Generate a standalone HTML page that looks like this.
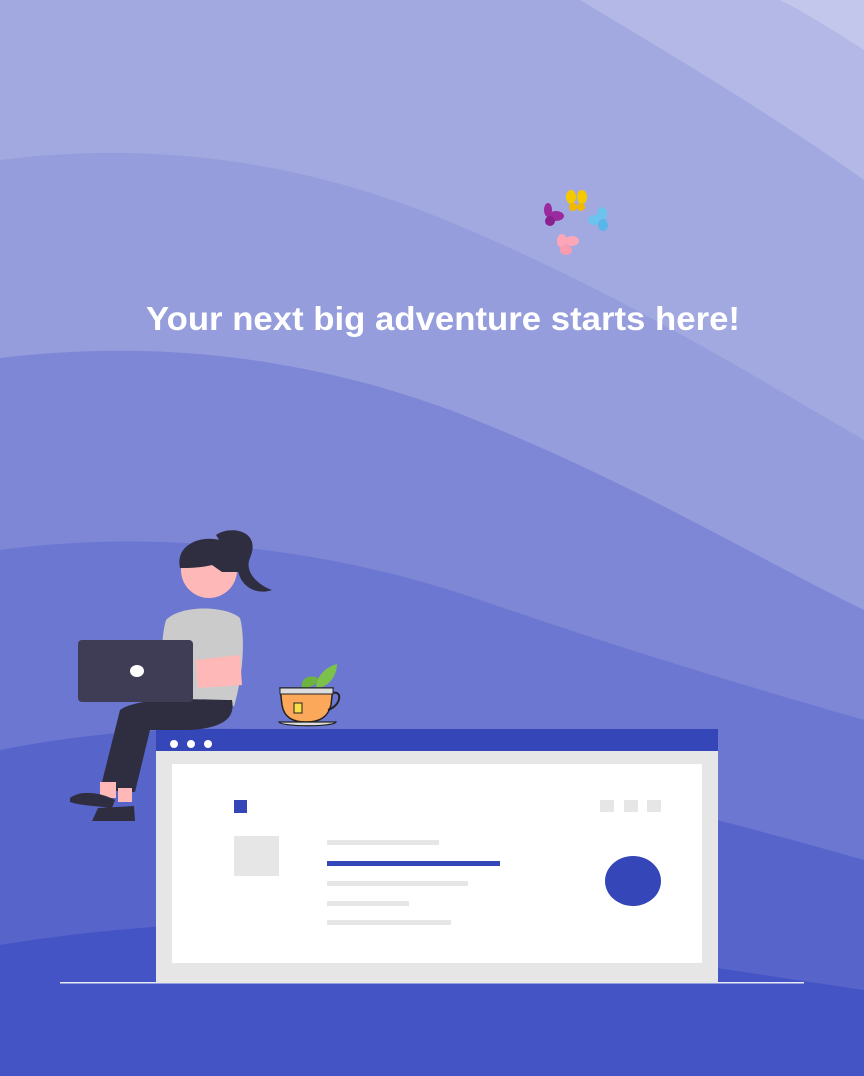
<!DOCTYPE html>
<html><head><style>
html,body{margin:0;padding:0;width:864px;height:1076px;overflow:hidden;background:#4453c4}
svg{display:block}
</style></head><body>
<svg width="864" height="1076" viewBox="0 0 864 1076" xmlns="http://www.w3.org/2000/svg">
<rect width="864" height="1076" fill="#a2a9e0"/>
<path d="M580 0 C680 60 780 120 864 180 L864 0Z" fill="#b3b8e6"/>
<path d="M780 0 C810 15 840 35 864 50 L864 0Z" fill="#c3c7ec"/>
<path d="M0 160 C120 145 260 150 420 210 C600 280 760 380 864 440 L864 1076 L0 1076Z" fill="#959ddc"/>
<path d="M0 358 C150 340 300 355 450 410 C620 475 760 560 864 610 L864 1076 L0 1076Z" fill="#7d87d6"/>
<path d="M0 550 C150 530 320 545 480 600 C640 655 760 690 864 720 L864 1076 L0 1076Z" fill="#6b77d0"/>
<path d="M0 750 C150 720 320 720 480 760 C640 800 760 830 864 860 L864 1076 L0 1076Z" fill="#5765cb"/>
<path d="M0 945 C150 920 320 915 480 935 C640 955 760 975 864 990 L864 1076 L0 1076Z" fill="#4554c5"/>
<text x="443" y="330" text-anchor="middle" font-family="Liberation Sans, sans-serif" font-size="33" font-weight="bold" fill="#fff" textLength="594" lengthAdjust="spacingAndGlyphs">Your next big adventure starts here!</text>
<!-- butterflies -->
<g transform="translate(576,201)"><ellipse cx="-5" cy="-4" rx="5" ry="7" fill="#f5c800"/><ellipse cx="6" cy="-4" rx="5" ry="7" fill="#f5c800"/><ellipse cx="-3" cy="6" rx="4" ry="4" fill="#f0b800"/><ellipse cx="5" cy="6" rx="4" ry="4" fill="#f0b800"/></g>
<g transform="translate(550,216)"><ellipse cx="-2" cy="-6" rx="4" ry="7" fill="#9b2a9e"/><ellipse cx="6" cy="0" rx="8" ry="5" fill="#9b2a9e"/><ellipse cx="0" cy="5" rx="5" ry="5" fill="#8a1f90"/></g>
<g transform="translate(600,220)"><ellipse cx="2" cy="-6" rx="5" ry="7" fill="#6cc3ee"/><ellipse cx="-5" cy="0" rx="7" ry="5" fill="#6cc3ee"/><ellipse cx="3" cy="5" rx="5" ry="6" fill="#5ab5e8"/></g>
<g transform="translate(566,244)"><ellipse cx="-4" cy="-3" rx="5" ry="7" fill="#fca6b8"/><ellipse cx="6" cy="-3" rx="7" ry="5" fill="#fca6b8"/><ellipse cx="0" cy="6" rx="6" ry="5" fill="#fa9cb0"/></g>
<rect x="60" y="982" width="744" height="1.5" fill="#e8eaf8"/>
<rect x="156" y="729" width="562" height="22" fill="#3546b8"/>
<circle cx="174" cy="744" r="4" fill="#fff"/><circle cx="191" cy="744" r="4" fill="#fff"/><circle cx="208" cy="744" r="4" fill="#fff"/>
<rect x="156" y="751" width="562" height="232" fill="#e6e6e6"/>
<rect x="172" y="764" width="530" height="199" fill="#fff"/>
<rect x="234" y="800" width="13" height="13" fill="#3546b8"/>
<rect x="600" y="800" width="14" height="12" fill="#e6e6e6"/><rect x="624" y="800" width="14" height="12" fill="#e6e6e6"/><rect x="647" y="800" width="14" height="12" fill="#e6e6e6"/>
<rect x="234" y="836" width="45" height="40" fill="#e6e6e6"/>
<rect x="327" y="840" width="112" height="5" fill="#e6e6e6"/>
<rect x="327" y="861" width="173" height="5" fill="#3546b8"/>
<rect x="327" y="881" width="141" height="5" fill="#e6e6e6"/>
<rect x="327" y="901" width="82" height="5" fill="#e6e6e6"/>
<rect x="327" y="920" width="124" height="5" fill="#e6e6e6"/>
<ellipse cx="633" cy="881" rx="28" ry="25" fill="#3546b8"/>
<path d="M302 688 C300 678 310 674 318 678 C318 684 312 688 302 688Z" fill="#6cb33f"/>
<path d="M316 688 C316 675 328 666 337 664 C337 676 328 688 316 688Z" fill="#7cc24a"/>
<path d="M280 688 L333 688 L331 705 C328 717 320 722 306 722 C292 722 284 717 282 705Z" fill="#fba85a" stroke="#222" stroke-width="1.5"/>
<rect x="280" y="688" width="53" height="6" fill="#ddd" stroke="#222" stroke-width="1"/>
<path d="M333 693 C342 690 342 705 328 710" fill="none" stroke="#222" stroke-width="2"/>
<rect x="294" y="703" width="8" height="10" fill="#f8e04a" stroke="#222" stroke-width="1"/>
<path d="M279 722 L336 722 C334 727 282 727 279 722Z" fill="#ddd" stroke="#222" stroke-width="1.2"/>
<path d="M216 535 C230 525 262 530 250 558 C244 572 258 585 272 590 C255 596 240 585 238 570Z" fill="#2f2e41"/>
<circle cx="209" cy="570" r="28" fill="#ffb8b8"/>
<path d="M180 568 C175 545 200 535 220 540 C240 545 245 560 240 572 L222 572 L212 565 C200 568 188 568 180 568Z" fill="#2f2e41"/>
<path d="M166 620 C180 605 225 605 240 618 C246 640 242 680 234 706 L175 706 C160 680 160 640 166 620Z" fill="#cbcbcb"/>
<path d="M195 660 L240 655 L242 685 L198 688Z" fill="#ffb8b8"/>
<path d="M100 790 L120 710 C140 695 210 700 232 700 C236 720 220 728 190 730 L150 730 L135 792Z" fill="#2f2e41"/>
<rect x="100" y="782" width="16" height="16" fill="#ffb8b8"/><rect x="118" y="788" width="14" height="14" fill="#ffb8b8"/>
<path d="M70 798 C80 790 100 792 115 800 L112 808 C98 806 82 806 70 802Z" fill="#2f2e41"/>
<path d="M98 808 L134 806 L135 821 L92 821Z" fill="#2f2e41"/>
<rect x="78" y="640" width="115" height="62" rx="4" fill="#3f3d56"/>
<ellipse cx="137" cy="671" rx="7" ry="6" fill="#fff"/>
</svg>
</body></html>
